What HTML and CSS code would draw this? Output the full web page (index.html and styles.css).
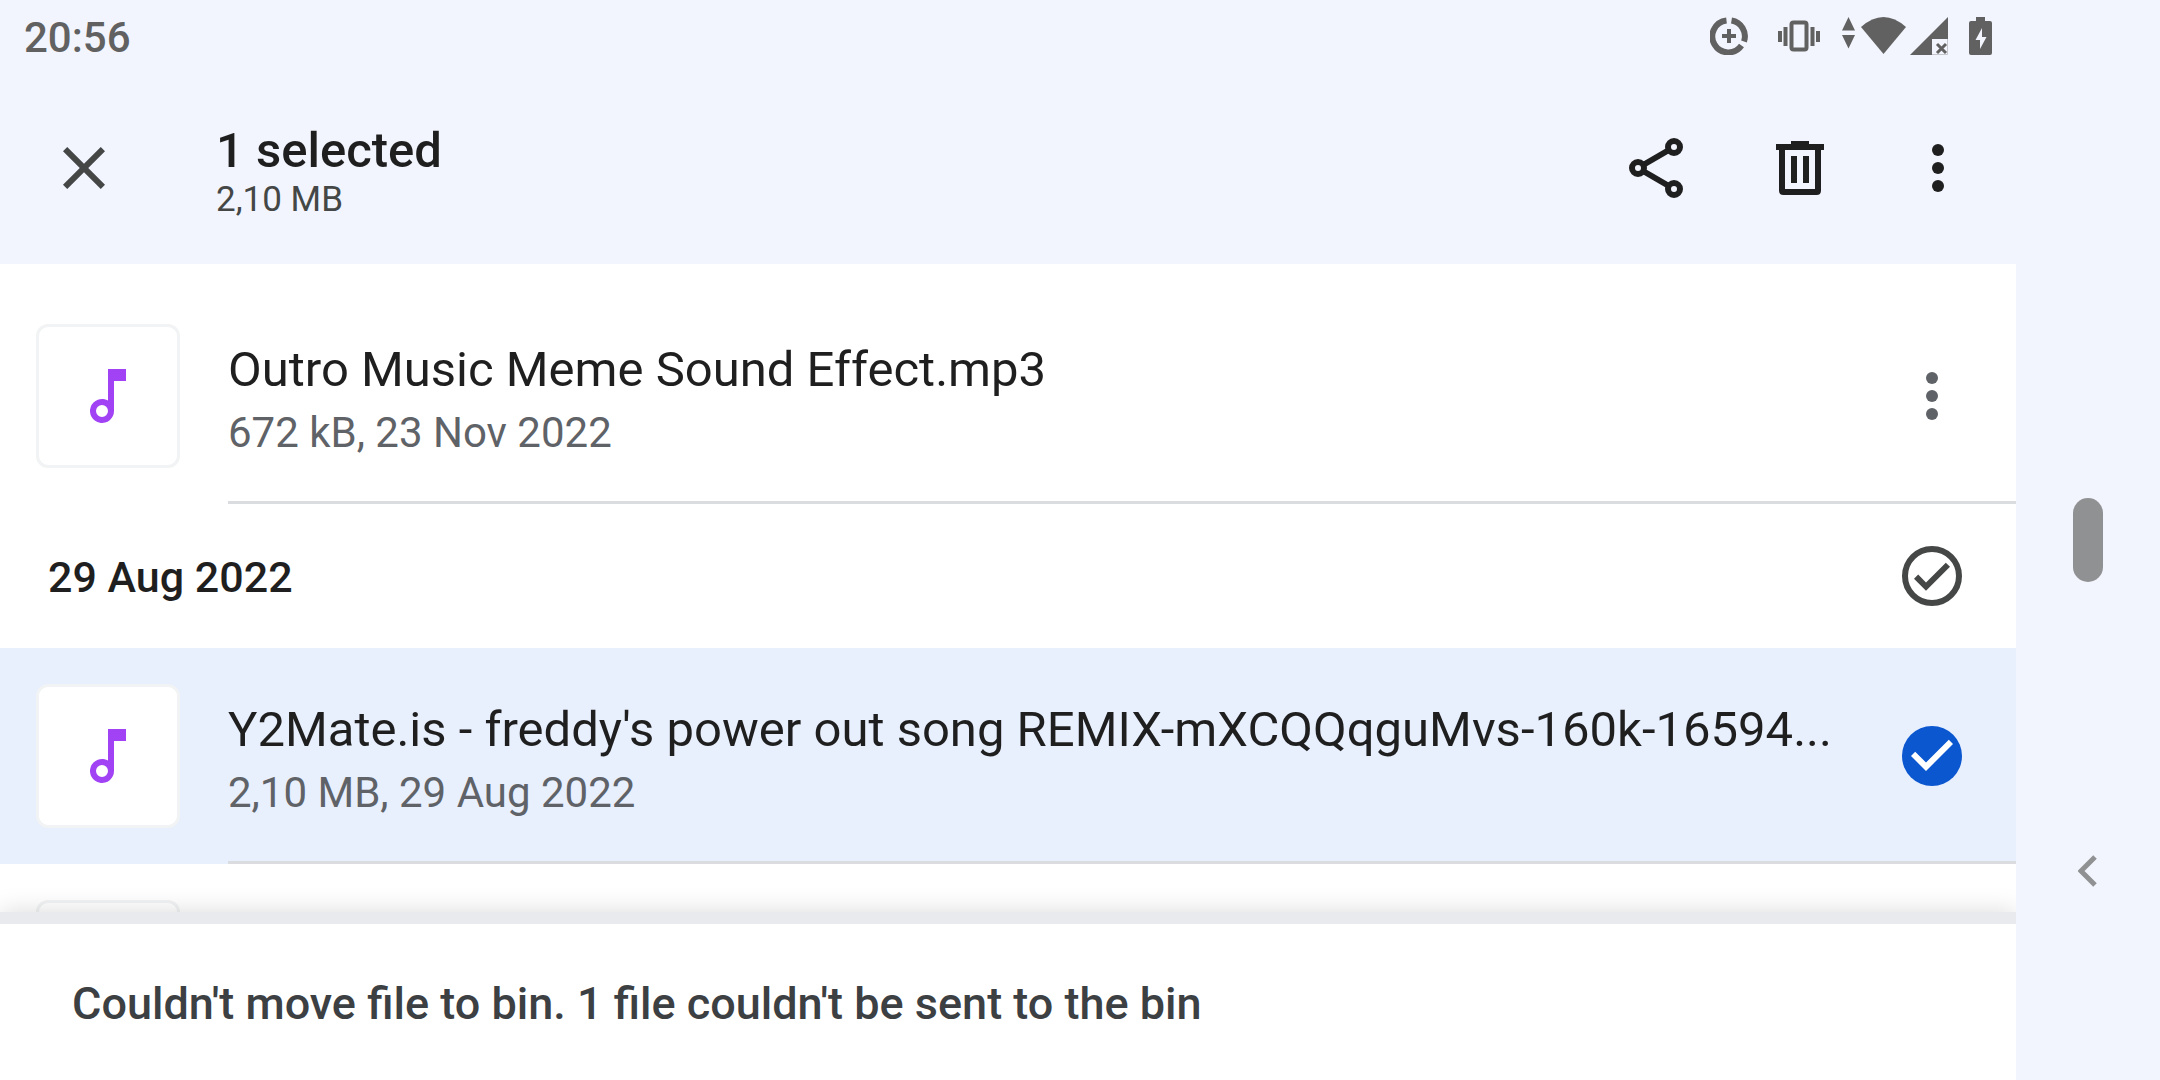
FILE: index.html
```
<!DOCTYPE html>
<html lang="en">
<head>
	<meta charset="UTF-8">
	<title>Files</title>
	<link rel="stylesheet" href="styles.css">
</head>
<body>
	<div class="screen">
		<div class="app">
			<div class="statusbar">
				<span class="time">20:56</span>
				<div class="status_icons">
					<!-- data saver -->
					<svg width="38" height="38" viewBox="0 0 38 38">
						<path d="M16.5 3.5A16 16 0 1 0 31.5 28.5" fill="none" stroke="#616161" stroke-width="6"/>
						<path d="M21.5 3.5A16 16 0 0 1 34 24.5" fill="none" stroke="#616161" stroke-width="6"/>
						<path d="M17 12h4v5h5v4h-5v5h-4v-5h-5v-4h5z" fill="#616161"/>
					</svg>
					<!-- vibrate -->
					<svg class="vibrate" width="42" height="38" viewBox="0 0 42 38">
						<rect x="13.5" y="5.5" width="15" height="27" rx="2" fill="none" stroke="#616161" stroke-width="4"/>
						<path d="M0 14h4v11H0zM5.5 10h4v19h-4zM32.5 10h4v19h-4zM38 14h4v11h-4z" fill="#616161"/>
					</svg>
					<!-- wifi with traffic arrows -->
					<svg class="wifi" width="64" height="38" viewBox="0 0 64 38">
						<path d="M6.5 0L13 13.500H0zM0 18h13L6.500 31.500z" fill="#616161"/>
						<path d="M19 10Q41.500-10 64 10L41.500 37z" fill="#616161"/>
					</svg>
					<!-- mobile signal, no data -->
					<svg class="signal" width="38" height="38" viewBox="0 0 38 38">
						<path d="M38 0V22H22V38H0z" fill="#616161"/>
						<path d="M37.5 22V37.500H22" fill="none" stroke="#c4c6cc"/>
						<path d="M27 27l9 9M36 27l-9 9" stroke="#616161" stroke-width="3"/>
					</svg>
					<!-- battery charging -->
					<svg class="battery" width="23" height="38" viewBox="0 0 23 38">
						<path fill-rule="evenodd" d="M7 0h9v4h5q2 0 2 2v30q0 2-2 2H2q-2 0-2-2V6q0-2 2-2h5zM13 11L6.500 23H11v9l6.500-12H13z" fill="#616161"/>
					</svg>
				</div>
			</div>

			<header class="toolbar">
				<button class="icon_btn" aria-label="Close">
					<svg class="icon" viewBox="0 0 24 24"><path fill="#444746" d="M19 6.410L17.590 5 12 10.590 6.410 5 5 6.410 10.590 12 5 17.590 6.410 19 12 13.410 17.590 19 19 17.590 13.410 12z"/></svg>
				</button>
				<div class="heading">
					<h1>1 selected</h1>
					<p>2,10 MB</p>
				</div>
				<div class="actions">
					<button class="icon_btn" aria-label="Share">
						<svg class="icon" viewBox="0 0 24 24" fill="none" stroke="#1f1f1f" stroke-width="2">
							<path d="M16.300 6L7.700 11M7.700 13l8.600 5"/>
							<circle cx="18" cy="5" r="2"/>
							<circle cx="6" cy="12" r="2"/>
							<circle cx="18" cy="19" r="2"/>
						</svg>
					</button>
					<button class="icon_btn" aria-label="Delete">
						<svg class="icon" viewBox="0 0 24 24"><path fill="#1f1f1f" fill-rule="evenodd" d="M9 3h6v1h5v2h-1v13.500q0 1.500-1.500 1.500h-11q-1.500 0-1.500-1.500V6H4V4h5zM7 6v13h10V6zM9 8h2v9H9zM13 8h2v9h-2z"/></svg>
					</button>
					<button class="icon_btn more" aria-label="More options">
						<svg class="icon" viewBox="0 0 24 24" fill="#1f1f1f"><circle cx="12" cy="6" r="2"/><circle cx="12" cy="12" r="2"/><circle cx="12" cy="18" r="2"/></svg>
					</button>
				</div>
			</header>

			<main class="list">
				<div class="row">
					<div class="thumb">
						<svg class="icon" viewBox="0 0 24 24"><path fill="#a142f4" fill-rule="evenodd" d="M12 3h6v4h-4v10a4 4 0 1 1-2-3.460zM10 15a2 2 0 1 0 0 4 2 2 0 0 0 0-4z"/></svg>
					</div>
					<div class="info">
						<div class="text">
							<p class="name">Outro Music Meme Sound Effect.mp3</p>
							<p class="meta">672 kB, 23 Nov 2022</p>
						</div>
						<button class="icon_btn" aria-label="File options">
							<svg class="icon" viewBox="0 0 24 24" fill="#5f6368"><circle cx="12" cy="6" r="2"/><circle cx="12" cy="12" r="2"/><circle cx="12" cy="18" r="2"/></svg>
						</button>
					</div>
				</div>

				<div class="date">
					<h2>29 Aug 2022</h2>
					<button class="icon_btn" aria-label="Select all from 29 Aug 2022">
						<svg class="icon" viewBox="0 0 24 24">
							<circle cx="12" cy="12" r="9" fill="none" stroke="#444746" stroke-width="2"/>
							<path fill="#444746" d="M16.600 7.600L10 14.200l-2.600-2.700L6 12.900l4 4 8-8z"/>
						</svg>
					</button>
				</div>

				<div class="row selected">
					<div class="thumb">
						<svg class="icon" viewBox="0 0 24 24"><path fill="#a142f4" fill-rule="evenodd" d="M12 3h6v4h-4v10a4 4 0 1 1-2-3.460zM10 15a2 2 0 1 0 0 4 2 2 0 0 0 0-4z"/></svg>
					</div>
					<div class="info">
						<div class="text">
							<p class="name">Y2Mate.is - freddy's power out song REMIX-mXCQQqguMvs-160k-16594...</p>
							<p class="meta">2,10 MB, 29 Aug 2022</p>
						</div>
						<button class="icon_btn" aria-label="Deselect file">
							<svg class="icon" viewBox="0 0 24 24">
								<circle cx="12" cy="12" r="10" fill="#0b57d0"/>
								<path fill="#fff" d="M10 17l-5-5 1.400-1.400L10 14.200l7.600-7.600L19 8z"/>
							</svg>
						</button>
					</div>
				</div>

				<div class="row">
					<div class="thumb"></div>
				</div>
			</main>

			<div class="snackbar" role="status">Couldn't move file to bin. 1 file couldn't be sent to the bin</div>
		</div>

		<nav class="navbar">
			<span></span>
			<button aria-label="Home"><span class="pill"></span></button>
			<button aria-label="Back">
				<svg width="20" height="32" viewBox="0 0 20 32"><path d="M17 2L3 16l14 14" fill="none" stroke="#909192" stroke-width="5"/></svg>
			</button>
		</nav>
	</div>
</body>
</html>
```
FILE: styles.css
```
*{
	box-sizing: border-box;
}
body,h1,h2,p{
	margin: 0;
}
body{
	font-family: Roboto, "Liberation Sans", sans-serif;
	color: #1f1f1f;
	background: #f2f5fd;
}
button{
	padding: 0;
	border: 0;
	background: none;
	cursor: pointer;
}
svg{
	display: block;
	flex: none;
}
.screen{
	display: flex;
	height: 100vh;
	overflow: hidden;
}
.app{
	flex: 1;
	min-width: 0;
	display: flex;
	flex-direction: column;
}
.icon{
	width: 72px;
	height: 72px;
}
.icon_btn{
	flex: none;
}

/* status bar */
.statusbar{
	display: flex;
	justify-content: space-between;
	align-items: center;
	height: 72px;
	padding: 0 24px;
}
.time{
	padding-top: 2px;
	font-size: 42px;
	font-weight: 500;
	color: #616161;
}
.status_icons{
	display: flex;
}
.vibrate{
	margin-left: 30px;
}
.wifi{
	margin-left: 22px;
}
.signal{
	margin-left: 4px;
}
.battery{
	margin-left: 21px;
}

/* toolbar */
.toolbar{
	display: flex;
	align-items: center;
	height: 192px;
	padding: 0 42px 0 48px;
}
.heading{
	flex: 1;
	margin-left: 96px;
	padding-top: 8px;
}
.heading h1{
	font-size: 49px;
	font-weight: 500;
	line-height: 56px;
}
.heading p{
	font-size: 35px;
	line-height: 42px;
	color: #444746;
}
.actions{
	display: flex;
}
.actions .icon_btn{
	margin-left: 72px;
}
.actions .more{
	margin-left: 66px;
}

/* file list */
.list{
	flex: 1;
	min-height: 0;
	overflow: hidden;
	padding-top: 24px;
	background: #fff;
}
.row{
	display: flex;
	height: 216px;
	padding-left: 36px;
}
.selected{
	background: #e8effd;
}
.thumb{
	flex: none;
	display: flex;
	align-items: center;
	justify-content: center;
	width: 144px;
	height: 144px;
	margin: 36px 48px 0 0;
	border: 3px solid #f1f3f4;
	border-radius: 12px;
	background: #fff;
}
.info{
	flex: 1;
	min-width: 0;
	display: flex;
	align-items: center;
	padding: 3px 48px 0 0;
	border-bottom: 3px solid #dadce0;
}
.text{
	flex: 1;
	min-width: 0;
	padding-top: 8px;
}
.name{
	font-size: 49px;
	line-height: 66px;
	white-space: nowrap;
	overflow: hidden;
	text-overflow: ellipsis;
}
.meta{
	font-size: 42px;
	line-height: 60px;
	color: #5f6368;
}
.date{
	display: flex;
	align-items: center;
	justify-content: space-between;
	height: 144px;
	padding: 0 48px;
}
.date h2{
	padding-top: 2px;
	font-size: 43px;
	font-weight: 500;
}

/* message at the bottom */
.snackbar{
	position: relative;
	height: 168px;
	padding: 0 72px;
	border-top: 12px solid #e8eaed;
	background: #fff;
	box-shadow: 0 0 24px rgba(0,0,0,0.15);
	clip-path: inset(-30px 0 0 0);
	font-size: 45px;
	font-weight: 500;
	line-height: 160px;
	color: #3c4043;
}

/* system navigation */
.navbar{
	display: grid;
	grid-template-rows: repeat(3, 1fr);
	justify-items: center;
	align-items: center;
	width: 144px;
	padding: 44px 0;
}
.pill{
	display: block;
	width: 30px;
	height: 84px;
	border-radius: 15px;
	background: #909192;
}
```
